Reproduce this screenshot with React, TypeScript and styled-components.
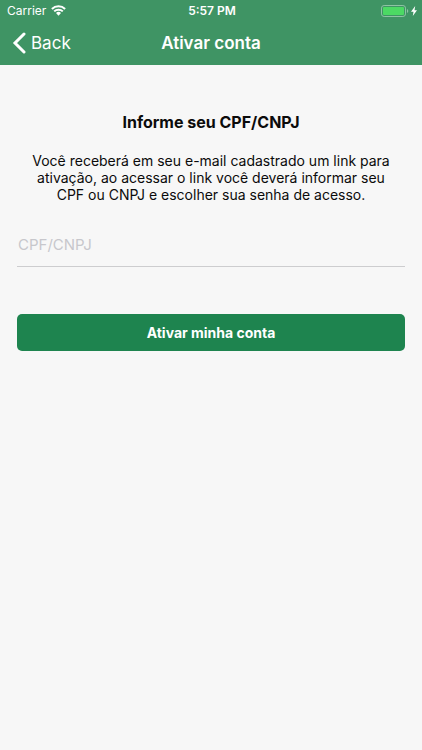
import React from "react";
import styled, { createGlobalStyle } from "styled-components";

const GlobalStyle = createGlobalStyle`
  *, *::before, *::after { box-sizing: border-box; }
  body {
    margin: 0;
    background: #f7f7f7;
    color: #0b0b0b;
    font-family: Inter, "Liberation Sans", sans-serif;
  }
`;

const Page = styled.div`
  display: flex;
  flex-direction: column;
  min-height: 100vh;
`;

const Header = styled.header`
  background: #3f9464;
  color: #fff;
`;

const StatusBar = styled.div`
  display: grid;
  grid-template-columns: 1fr auto 1fr;
  align-items: center;
  height: 21px;
  padding: 0 5px 0 7px;
  font-size: 12px;
`;

const Carrier = styled.div`
  display: flex;
  align-items: center;
  gap: 5px;
`;

const Clock = styled.time`
  font-weight: 600;
`;

const Battery = styled.div`
  display: flex;
  align-items: center;
  justify-content: flex-end;
  gap: 2px;
`;

const NavBar = styled.nav`
  display: grid;
  grid-template-columns: 1fr auto 1fr;
  align-items: center;
  height: 44px;
  padding: 0 12px;
`;

const BackButton = styled.button`
  display: flex;
  align-items: center;
  justify-self: start;
  gap: 5px;
  padding: 0;
  border: 0;
  background: none;
  color: inherit;
  font: inherit;
  font-size: 17px;
  cursor: pointer;
`;

const Title = styled.h1`
  margin: 0;
  font-size: 17px;
  font-weight: 600;
`;

const Form = styled.form`
  display: flex;
  flex-direction: column;
  padding: 47px 17px 0;
`;

const Heading = styled.h2`
  margin: 0 0 20px;
  font-size: 16px;
  line-height: 20px;
  font-weight: 700;
  text-align: center;
`;

const Description = styled.p`
  margin: 0 0 24px;
  padding: 0 12px;
  font-size: 14px;
  line-height: 17px;
  text-align: center;
`;

const Field = styled.input`
  width: 100%;
  height: 40px;
  padding: 0 1px 4px;
  border: 0;
  border-bottom: 1px solid #cdcdcf;
  border-radius: 0;
  outline: 0;
  background: transparent;
  color: inherit;
  font: inherit;
  font-size: 15px;
  &::placeholder { color: #c7c7cc; opacity: 1; }
`;

const SubmitButton = styled.button`
  height: 37px;
  margin-top: 47px;
  padding: 0;
  border: 0;
  border-radius: 5px;
  background: #1e844f;
  color: #fff;
  font: inherit;
  font-size: 14px;
  font-weight: 700;
  cursor: pointer;
`;

const WifiIcon = () => (
  <svg width="15" height="11" viewBox="0 0 15 11" fill="none" stroke="currentColor" strokeWidth="2" aria-hidden="true">
    <path d="M.9 4a9.3 9.3 0 0 1 13.2 0" />
    <path d="M3.2 6.4a6.1 6.1 0 0 1 8.6 0" />
    <path d="M5 8.1a3.5 3.5 0 0 1 5 0l-2.5 2.6z" fill="currentColor" stroke="none" />
  </svg>
);

const BatteryIcon = () => (
  <svg width="28" height="12" viewBox="0 0 28 12" aria-hidden="true">
    <rect x=".5" y=".5" width="24" height="11" rx="2.6" fill="none" stroke="#8fc3a4" />
    <rect x="2" y="2" width="21" height="8" rx="1" fill="#4cd964" />
    <path d="M26 4a2.2 2.2 0 0 1 0 4z" fill="#8fc3a4" />
  </svg>
);

const BoltIcon = () => (
  <svg width="6" height="10" viewBox="0 0 6 10" fill="currentColor" aria-hidden="true">
    <path d="M4.2 0 0 5.7h2.5L1.8 10 6 4.2H3.5z" />
  </svg>
);

const ChevronIcon = () => (
  <svg width="14" height="22" viewBox="0 0 14 22" fill="none" stroke="currentColor" strokeWidth="3" strokeLinecap="round" aria-hidden="true">
    <path d="M12 2 3 11l9 9" />
  </svg>
);

export default function App() {
  return (
    <Page>
      <GlobalStyle />
      <Header>
        <StatusBar>
          <Carrier>Carrier <WifiIcon /></Carrier>
          <Clock>5:57 PM</Clock>
          <Battery><BatteryIcon /><BoltIcon /></Battery>
        </StatusBar>
        <NavBar>
          <BackButton type="button"><ChevronIcon />Back</BackButton>
          <Title>Ativar conta</Title>
        </NavBar>
      </Header>
      <main>
        <Form onSubmit={(event) => event.preventDefault()}>
          <Heading id="document-label">Informe seu CPF/CNPJ</Heading>
          <Description id="document-help">
            Você receberá em seu e-mail cadastrado um link para ativação, ao acessar o link você deverá informar seu CPF ou CNPJ e escolher sua senha de acesso.
          </Description>
          <Field type="text" placeholder="CPF/CNPJ" aria-labelledby="document-label" aria-describedby="document-help" />
          <SubmitButton type="submit">Ativar minha conta</SubmitButton>
        </Form>
      </main>
    </Page>
  );
}
